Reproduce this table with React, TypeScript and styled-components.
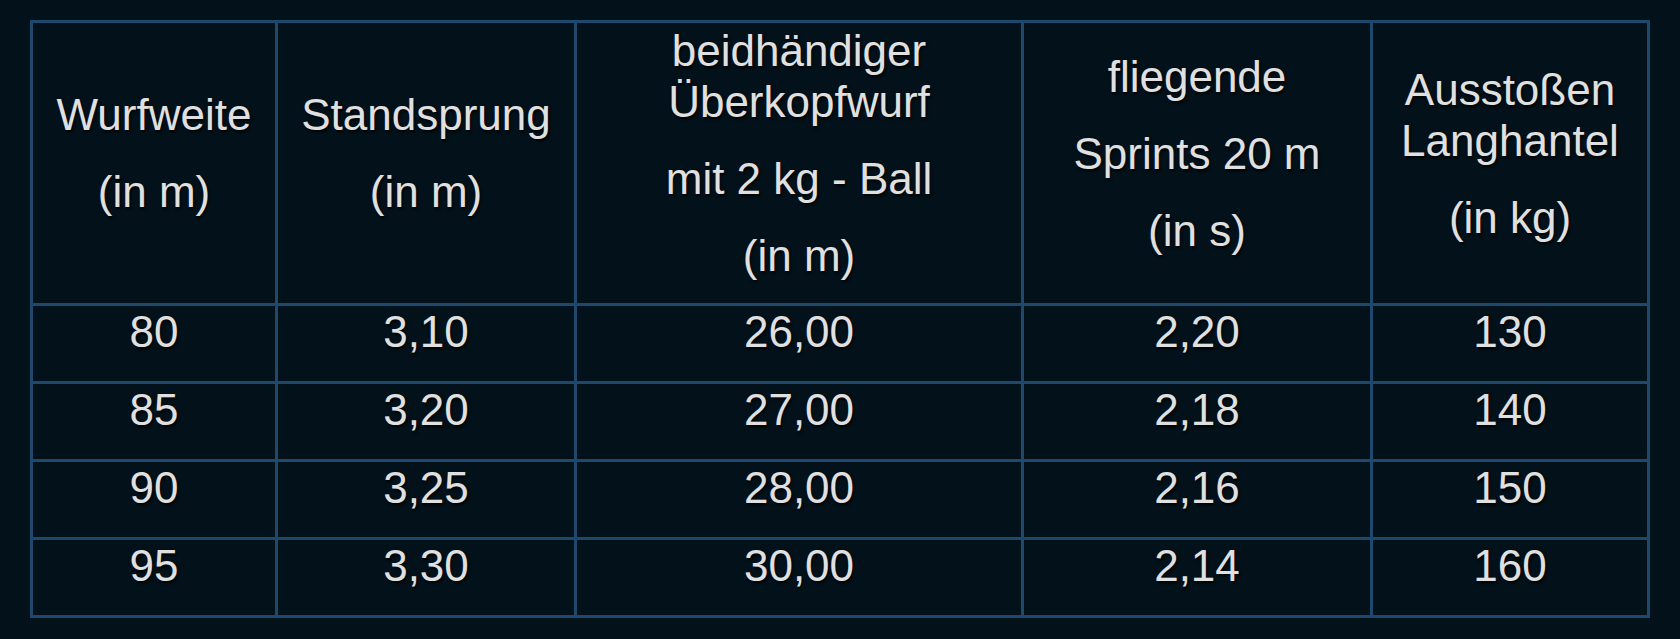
import styled, { createGlobalStyle } from 'styled-components'

const GlobalStyle = createGlobalStyle`
  html, body {
    margin: 0;
    padding: 0;
    background: #03111a;
  }
  body {
    font-family: 'Liberation Sans', Arial, sans-serif;
  }
`

type Column = {
  width: number
  title: string[][]
}

const columns: Column[] = [
  { width: 245, title: [['Wurfweite'], ['(in m)']] },
  { width: 299, title: [['Standsprung'], ['(in m)']] },
  {
    width: 447,
    title: [['beidhändiger', 'Überkopfwurf'], ['mit 2 kg - Ball'], ['(in m)']],
  },
  { width: 349, title: [['fliegende'], ['Sprints 20 m'], ['(in s)']] },
  { width: 277, title: [['Ausstoßen', 'Langhantel'], ['(in kg)']] },
]

const rows = [
  ['80', '3,10', '26,00', '2,20', '130'],
  ['85', '3,20', '27,00', '2,18', '140'],
  ['90', '3,25', '28,00', '2,16', '150'],
  ['95', '3,30', '30,00', '2,14', '160'],
]

const App = () => {
  return (
    <>
      <GlobalStyle />
      <Page>
        <Table>
          <colgroup>
            {columns.map((col, i) => (
              <col key={i} style={{ width: col.width }} />
            ))}
          </colgroup>
          <thead>
            <HeadRow>
              {columns.map((col, i) => (
                <HeadCell key={i}>
                  {col.title.map((para, j) => (
                    <Para key={j}>
                      {para.map((line, k) => (
                        <Line key={k}>{line}</Line>
                      ))}
                    </Para>
                  ))}
                </HeadCell>
              ))}
            </HeadRow>
          </thead>
          <tbody>
            {rows.map((row, i) => (
              <DataRow key={i}>
                {row.map((value, j) => (
                  <DataCell key={j}>{value}</DataCell>
                ))}
              </DataRow>
            ))}
          </tbody>
        </Table>
      </Page>
    </>
  )
}

export default App

const Page = styled.div`
  padding: 20px 0 0 30px;
  min-height: 639px;
  box-sizing: border-box;
`

const Table = styled.table`
  width: 1617px;
  table-layout: fixed;
  border-collapse: collapse;
  border: 3px solid #1d4a6c;
  color: #e0e0e0;
  font-size: 44px;
  text-shadow: 1px 2px 3px rgba(0, 0, 0, 0.85);
`

const HeadRow = styled.tr`
  height: 283px;
`

const HeadCell = styled.th`
  border: 3px solid #1d4a6c;
  font-weight: normal;
  text-align: center;
  vertical-align: middle;
  padding: 0 0 20px;
`

const Para = styled.div`
  line-height: 51px;

  & + & {
    margin-top: 26px;
  }
`

const Line = styled.div`
  white-space: nowrap;
`

const DataRow = styled.tr`
  height: 78px;
`

const DataCell = styled.td`
  border: 3px solid #1d4a6c;
  text-align: center;
  vertical-align: middle;
  padding: 0 0 24px;
  line-height: 51px;
`
